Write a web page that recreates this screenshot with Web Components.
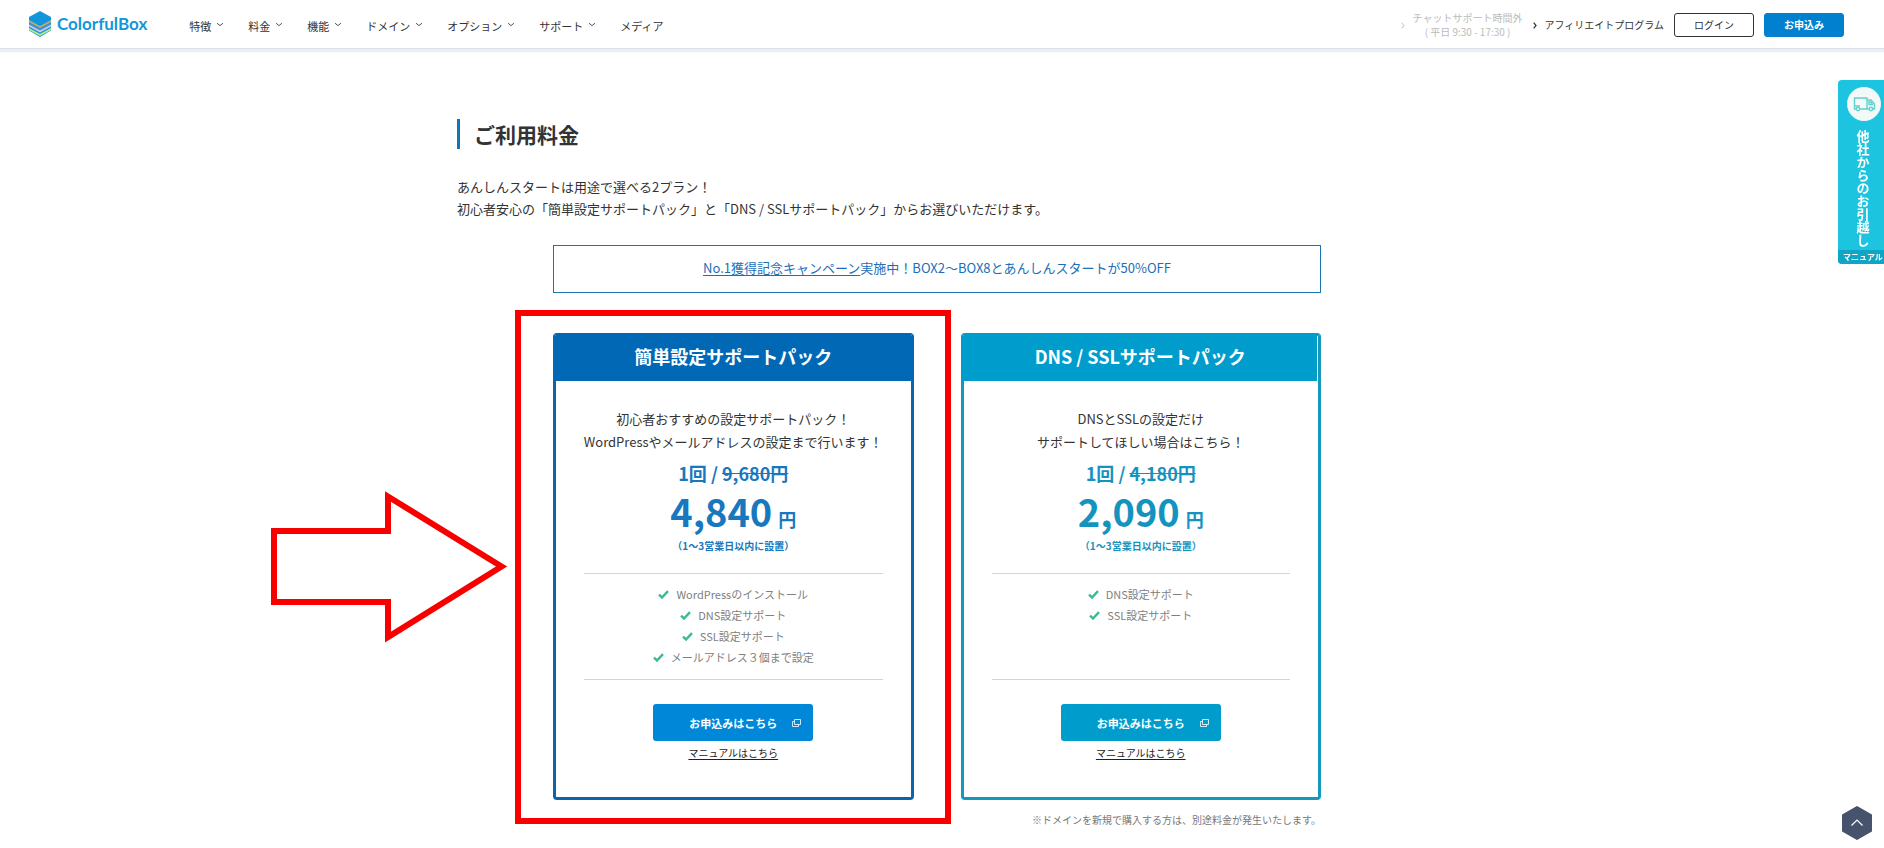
<!DOCTYPE html>
<html lang="ja">
<head>
<meta charset="utf-8">
<meta name="viewport" content="width=device-width, initial-scale=1">
<title>ご利用料金 | ColorfulBox</title>
<style>
  body {
    margin: 0;
    background: #fff;
    color: #333;
    font-family: "Noto Sans CJK JP", "Noto Sans", sans-serif;
    font-size: 13px;
    line-height: 22px;
    overflow-x: hidden;
  }
  main {
    padding: 71px 10px 0 0;
  }
  .content {
    max-width: 960px;
    margin: 0 auto;
  }
  .lead {
    margin: 27px 0 25px;
  }
  .plans {
    margin: 0 10%;
  }
  .cards {
    display: grid;
    grid-template-columns: 1fr 1fr;
    gap: 47px;
    margin-top: 40px;
  }
  .note {
    margin: 9px 0 0;
    color: #777;
    font-size: 10px;
    text-align: right;
  }
</style>
</head>
<body>
  <site-header></site-header>
  <main>
    <div class="content">
      <section-heading>ご利用料金</section-heading>
      <p class="lead">あんしんスタートは用途で選べる2プラン！<br>初心者安心の「簡単設定サポートパック」と「DNS / SSLサポートパック」からお選びいただけます。</p>
      <div class="plans">
        <campaign-banner label="No.1獲得記念キャンペーン">実施中！BOX2～BOX8とあんしんスタートが50%OFF</campaign-banner>
        <div class="cards">
          <highlight-frame>
            <plan-card theme="blue" name="簡単設定サポートパック" regular="9,680円" price="4,840"
              features="WordPressのインストール|DNS設定サポート|SSL設定サポート|メールアドレス３個まで設定">初心者おすすめの設定サポートパック！<br>WordPressやメールアドレスの設定まで行います！</plan-card>
          </highlight-frame>
          <plan-card theme="cyan" name="DNS / SSLサポートパック" regular="4,180円" price="2,090"
            features="DNS設定サポート|SSL設定サポート">DNSとSSLの設定だけ<br>サポートしてほしい場合はこちら！</plan-card>
        </div>
        <p class="note">※ドメインを新規で購入する方は、別途料金が発生いたします。</p>
      </div>
    </div>
  </main>
  <moving-tab></moving-tab>
  <page-top></page-top>

<script>
class NavItem extends HTMLElement {
  connectedCallback() {
    this.attachShadow({ mode: 'open' });
    const arrow = this.hasAttribute('menu')
      ? '<svg width="8" height="6" viewBox="0 0 8 6"><path d="M1 1.2l3 2.4 3-2.4" fill="none" stroke="#555"/></svg>'
      : '';
    this.shadowRoot.innerHTML = `
      <style>
        :host {
          display: block;
        }
        a {
          display: flex;
          align-items: center;
          gap: 5px;
          color: #333;
          font-size: 11px;
          text-decoration: none;
          white-space: nowrap;
        }
        svg {
          margin-bottom: 2px;
        }
      </style>
      <a href="#"><slot></slot>${arrow}</a>
    `;
  }
}
customElements.define('nav-item', NavItem);

class SiteHeader extends HTMLElement {
  connectedCallback() {
    this.attachShadow({ mode: 'open' });
    this.shadowRoot.innerHTML = `
      <style>
        :host {
          display: block;
        }
        header {
          display: flex;
          align-items: center;
          height: 48px;
          padding: 0 40px 0 28px;
          background: #fff;
          box-shadow: 0 1px 0 #dde1e7, 0 4px 1px #ebeef3;
        }
        .logo {
          display: flex;
          align-items: center;
          gap: 5px;
          color: #1296db;
          font: 700 17px/24px Lato, sans-serif;
          text-decoration: none;
        }
        nav {
          display: flex;
          flex: 1;
          gap: 24px;
          padding: 3px 0 0 42px;
        }
        .side {
          display: flex;
          align-items: center;
          gap: 10px;
          padding-top: 2px;
          font-size: 10px;
          line-height: 14px;
          white-space: nowrap;
        }
        .link {
          display: flex;
          align-items: center;
          gap: 8px;
          color: #333;
          text-decoration: none;
        }
        .closed {
          color: #bbb;
          text-align: center;
        }
        button {
          box-sizing: border-box;
          width: 80px;
          height: 24px;
          padding: 0;
          border: 1px solid #333;
          border-radius: 3px;
          background: #fff;
          color: #333;
          font: inherit;
        }
        .apply {
          border-color: #0080cf;
          background: #0080cf;
          color: #fff;
          font-weight: 700;
        }
      </style>
      <header>
        <a class="logo" href="#">
          <svg width="24" height="26" viewBox="0 0 24 26">
            <path d="M12 0L23 6v13.500L12 26 1 19.500V6z" fill="#1296db"/>
            <path d="M1 9l11 6 11-6v2.200l-11 6-11-6z" fill="#b9a878"/>
            <path d="M1 11.500l11 6 11-6v2.300l-11 6-11-6z" fill="#3c8fd0"/>
            <path d="M1 13.500l11 6 11-6v2l-11 6-11-6z" fill="#c7cdf0"/>
            <path d="M1 17l11 6 11-6v2l-11 6-11-6z" fill="#c3e88a"/>
          </svg>
          <span>ColorfulBox</span>
        </a>
        <nav>
          <nav-item menu>特徴</nav-item>
          <nav-item menu>料金</nav-item>
          <nav-item menu>機能</nav-item>
          <nav-item menu>ドメイン</nav-item>
          <nav-item menu>オプション</nav-item>
          <nav-item menu>サポート</nav-item>
          <nav-item>メディア</nav-item>
        </nav>
        <div class="side">
          <a class="link closed" href="#">
            <svg width="4" height="7" viewBox="0 0 4 7"><path d="M.7.700L3 3.500.7 6.300" fill="none" stroke="#bbb"/></svg>
            <span>チャットサポート時間外<br>( 平日 9:30 - 17:30 )</span>
          </a>
          <a class="link" href="#">
            <svg width="4" height="7" viewBox="0 0 4 7"><path d="M.7.700L3 3.500.7 6.300" fill="none" stroke="#333" stroke-width="1.200"/></svg>
            <span>アフィリエイトプログラム</span>
          </a>
          <button type="button">ログイン</button>
          <button type="button" class="apply">お申込み</button>
        </div>
      </header>
    `;
  }
}
customElements.define('site-header', SiteHeader);

class SectionHeading extends HTMLElement {
  connectedCallback() {
    this.attachShadow({ mode: 'open' });
    this.shadowRoot.innerHTML = `
      <style>
        :host {
          display: block;
        }
        h2 {
          margin: 0;
          padding-left: 14px;
          border-left: 3px solid #0f75b8;
          font-size: 21px;
          font-weight: 700;
          line-height: 30px;
        }
      </style>
      <h2><slot></slot></h2>
    `;
  }
}
customElements.define('section-heading', SectionHeading);

class CampaignBanner extends HTMLElement {
  connectedCallback() {
    this.attachShadow({ mode: 'open' });
    this.shadowRoot.innerHTML = `
      <style>
        :host {
          display: block;
        }
        p {
          margin: 0;
          padding: 11px 12px 13px;
          border: 1px solid #1b76b0;
          color: #1a6fb8;
          text-align: center;
        }
        a {
          color: inherit;
          text-underline-offset: 2px;
        }
      </style>
      <p><a href="#">${this.getAttribute('label')}</a><slot></slot></p>
    `;
  }
}
customElements.define('campaign-banner', CampaignBanner);

class PlanCard extends HTMLElement {
  connectedCallback() {
    this.attachShadow({ mode: 'open' });
    const features = this.getAttribute('features').split('|').map(text => `
      <li>
        <svg width="11" height="9" viewBox="0 0 11 9"><path d="M1 4.700l3 2.800L10 1.200" fill="none" stroke="#35bd94" stroke-width="2.400"/></svg>
        <span>${text}</span>
      </li>`).join('');
    this.shadowRoot.innerHTML = `
      <style>
        :host {
          display: block;
          --head: #0068b5;
          --line: #0d65a9;
          --price: #1878be;
          --button: #0087d7;
        }
        :host([theme="cyan"]) {
          --head: #009ccc;
          --line: #1498bb;
          --price: #1593bf;
          --button: #009ccc;
        }
        article {
          border: 3px solid var(--line);
          border-top-color: var(--head);
          border-radius: 4px;
          text-align: center;
        }
        h3 {
          margin: 0;
          padding-bottom: 5px;
          background: var(--head);
          box-shadow: -3px 0 0 var(--head), 3px 0 0 var(--head);
          color: #fff;
          font-size: 18px;
          font-weight: 700;
          line-height: 40px;
        }
        :host([theme="cyan"]) h3 {
          margin-right: 1px;
          box-shadow: -3px 0 0 var(--head);
        }
        .body {
          padding: 26px 28px 36px;
        }
        p {
          margin: 0;
        }
        .description {
          margin: 0 -28px 4px;
          line-height: 23px;
        }
        .price {
          color: var(--price);
          font-weight: 700;
        }
        .regular {
          font-size: 18px;
          line-height: 32px;
        }
        .amount {
          display: flex;
          align-items: baseline;
          justify-content: center;
          gap: 6px;
          height: 44px;
          font-size: 38px;
          line-height: 44px;
        }
        .amount span {
          font-size: 18px;
        }
        .term {
          margin: 3px 0 17px;
          font-size: 10px;
          line-height: 20px;
        }
        ul {
          min-height: 84px;
          margin: 0 0 24px;
          padding: 10px 0 11px;
          border: solid #d5d5d5;
          border-width: 1px 0;
          list-style: none;
          color: #808080;
          font-size: 11px;
          line-height: 21px;
        }
        li {
          display: flex;
          align-items: center;
          justify-content: center;
          gap: 7px;
        }
        button {
          display: grid;
          grid-template-columns: 1fr auto 1fr;
          align-items: center;
          width: 160px;
          height: 37px;
          margin: 0 auto 4px;
          padding: 0 12px;
          border: 0;
          border-radius: 3px;
          background: var(--button);
          color: #fff;
          font: inherit;
          font-size: 11px;
          font-weight: 700;
        }
        button span {
          grid-column: 2;
        }
        button svg {
          justify-self: end;
        }
        .manual {
          display: block;
          color: #222;
          font-size: 10px;
          line-height: 16px;
          text-underline-offset: 2px;
        }
      </style>
      <article>
        <h3>${this.getAttribute('name')}</h3>
        <div class="body">
          <p class="description"><slot></slot></p>
          <div class="price">
            <p class="regular">1回 / <s>${this.getAttribute('regular')}</s></p>
            <p class="amount">${this.getAttribute('price')} <span>円</span></p>
            <p class="term">（1～3営業日以内に設置）</p>
          </div>
          <ul>${features}</ul>
          <button type="button">
            <span>お申込みはこちら</span>
            <svg width="9" height="8" viewBox="0 0 9 8"><path d="M2.500.500h6v5h-6zM2.500 2.500h-2v5h6v-2" fill="none" stroke="#fff" stroke-opacity=".8"/></svg>
          </button>
          <a class="manual" href="#">マニュアルはこちら</a>
        </div>
      </article>
    `;
  }
}
customElements.define('plan-card', PlanCard);

// Red frame drawn over the recommended plan, with an arrow pointing at it
class HighlightFrame extends HTMLElement {
  connectedCallback() {
    this.attachShadow({ mode: 'open' });
    this.shadowRoot.innerHTML = `
      <style>
        :host {
          display: block;
          position: relative;
        }
        .frame {
          position: absolute;
          inset: -23px -37px -24px -38px;
          border: 6px solid #f80000;
          pointer-events: none;
        }
        svg {
          position: absolute;
          top: 157px;
          left: -283px;
          pointer-events: none;
        }
      </style>
      <slot></slot>
      <div class="frame"></div>
      <svg width="240" height="154" viewBox="0 0 240 154">
        <path d="M4 41H118V6.500L231.500 76.500 118 147V112H4z" fill="none" stroke="#f80000" stroke-width="6"/>
      </svg>
    `;
  }
}
customElements.define('highlight-frame', HighlightFrame);

class MovingTab extends HTMLElement {
  connectedCallback() {
    this.attachShadow({ mode: 'open' });
    this.shadowRoot.innerHTML = `
      <style>
        :host {
          position: fixed;
          top: 80px;
          right: 0;
        }
        a {
          display: flex;
          flex-direction: column;
          align-items: center;
          width: 46px;
          border-radius: 4px 0 0 4px;
          background: #1cc4df;
          color: #fff;
          font-weight: 700;
          text-decoration: none;
          overflow: hidden;
        }
        svg {
          margin: 7px 0 9px 6px;
        }
        .label {
          height: 120px;
          padding-left: 3px;
          font-size: 13px;
          line-height: 16px;
          writing-mode: vertical-rl;
        }
        .manual {
          width: 100%;
          padding-left: 4px;
          background: #0ea6c4;
          font-size: 8px;
          line-height: 14px;
          text-align: center;
          white-space: nowrap;
        }
      </style>
      <a href="#">
        <svg width="34" height="34" viewBox="0 0 34 34">
          <circle cx="17" cy="17" r="17" fill="#f3f8f8"/>
          <g fill="none" stroke="#62d2cb" stroke-width="1.400">
            <path d="M9 22H7.500V11H20v11h-8M20 13h4l3.500 4v5H26M20 22h2"/>
            <path d="M22 15h2l1.500 2.500H22zM8 19h5"/>
            <circle cx="11" cy="22" r="1.700"/>
            <circle cx="24" cy="22" r="1.700"/>
          </g>
        </svg>
        <span class="label">他社からのお引越し</span>
        <span class="manual">マニュアル</span>
      </a>
    `;
  }
}
customElements.define('moving-tab', MovingTab);

class PageTop extends HTMLElement {
  connectedCallback() {
    this.attachShadow({ mode: 'open' });
    this.shadowRoot.innerHTML = `
      <style>
        :host {
          position: fixed;
          right: 12px;
          bottom: 8px;
        }
        button {
          display: block;
          padding: 0;
          border: 0;
          background: none;
        }
        svg {
          display: block;
        }
      </style>
      <button type="button" aria-label="ページの先頭へ">
        <svg width="30" height="34" viewBox="0 0 30 34">
          <path d="M15 1L29 9v16l-14 8-14-8V9z" fill="#47536c" stroke="#47536c" stroke-width="2" stroke-linejoin="round"/>
          <path d="M9.500 19.500L15 14l5.500 5.500" fill="none" stroke="#fff" stroke-width="1.200"/>
        </svg>
      </button>
    `;
  }
}
customElements.define('page-top', PageTop);
</script>
</body>
</html>
